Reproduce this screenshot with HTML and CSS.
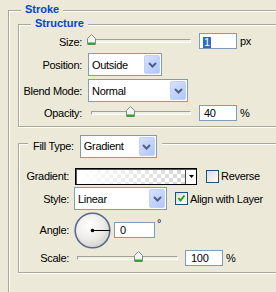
FILE: index.html
```html
<!DOCTYPE html>
<html lang="en">
<head>
    <meta charset="UTF-8">
    <meta name="viewport" content="width=device-width, initial-scale=1.0">
    <title>Stroke</title>
    <link rel="stylesheet" href="styles.css">
</head>
<body>
    <div class="group outer">
        <div class="group-title">Stroke</div>

        <!-- Structure -->
        <div class="group structure">
            <div class="group-title">Structure</div>
            <div class="form struct-form">
                <label>Size:</label>
                <div class="controls top">
                    <div class="slider"><div class="rail">
                        <span class="thumb" style="left:0%"><svg width="9" height="11" viewBox="0 0 9 11"><path d="M4.5 0.5 L8.5 4.5 V10.5 H0.5 V4.5 Z" fill="#f3f3ef" stroke="#7d8f80"/><path d="M1 9.5 H8" stroke="#28a428" stroke-width="2"/></svg></span>
                    </div></div>
                    <div class="textbox num"><span class="selected">1</span></div>
                    <span class="unit">px</span>
                </div>

                <label>Position:</label>
                <div class="controls">
                    <div class="select pos-select">
                        <span class="value">Outside</span>
                        <span class="drop"><svg width="9" height="6" viewBox="0 0 9 6"><path d="M1 1 L4.5 4.5 L8 1" fill="none" stroke="#4d6185" stroke-width="2"/></svg></span>
                    </div>
                </div>

                <label>Blend Mode:</label>
                <div class="controls">
                    <div class="select blend-select">
                        <span class="value">Normal</span>
                        <span class="drop"><svg width="9" height="6" viewBox="0 0 9 6"><path d="M1 1 L4.5 4.5 L8 1" fill="none" stroke="#4d6185" stroke-width="2"/></svg></span>
                    </div>
                </div>

                <label>Opacity:</label>
                <div class="controls">
                    <div class="slider"><div class="rail">
                        <span class="thumb" style="left:40%"><svg width="9" height="11" viewBox="0 0 9 11"><path d="M4.5 0.5 L8.5 4.5 V10.5 H0.5 V4.5 Z" fill="#f3f3ef" stroke="#7d8f80"/><path d="M1 9.5 H8" stroke="#28a428" stroke-width="2"/></svg></span>
                    </div></div>
                    <div class="textbox num">40</div>
                    <span class="unit">%</span>
                </div>
            </div>
        </div>

        <!-- Fill -->
        <div class="group fill">
            <div class="group-title fill-title">
                <span>Fill Type:</span>
                <div class="select type-select">
                    <span class="value">Gradient</span>
                    <span class="drop"><svg width="9" height="6" viewBox="0 0 9 6"><path d="M1 1 L4.5 4.5 L8 1" fill="none" stroke="#4d6185" stroke-width="2"/></svg></span>
                </div>
            </div>
            <div class="form fill-form">
                <label>Gradient:</label>
                <div class="controls">
                    <div class="swatch">
                        <span class="ramp"></span>
                        <span class="swatch-drop"><svg width="5" height="3" viewBox="0 0 5 3"><path d="M0 0 H5 L2.5 3 Z" fill="#000"/></svg></span>
                    </div>
                    <span class="check reverse-check"></span>
                    <span class="check-label">Reverse</span>
                </div>

                <label>Style:</label>
                <div class="controls">
                    <div class="select style-select">
                        <span class="value">Linear</span>
                        <span class="drop"><svg width="9" height="6" viewBox="0 0 9 6"><path d="M1 1 L4.5 4.5 L8 1" fill="none" stroke="#4d6185" stroke-width="2"/></svg></span>
                    </div>
                    <span class="check align-check"><svg width="11" height="11" viewBox="0 0 11 11"><path d="M2.5 5 L4.5 7.5 L8.5 2.5" fill="none" stroke="#21a121" stroke-width="2"/></svg></span>
                    <span class="check-label">Align with Layer</span>
                </div>

                <label>Angle:</label>
                <div class="controls">
                    <svg class="dial" width="37" height="37" viewBox="0 0 37 37">
                        <defs>
                            <radialGradient id="dialFill" cx="40%" cy="35%" r="70%">
                                <stop offset="0" stop-color="#ffffff"/>
                                <stop offset="0.6" stop-color="#ecebe6"/>
                                <stop offset="1" stop-color="#cfcfcb"/>
                            </radialGradient>
                        </defs>
                        <circle cx="18.5" cy="18.5" r="17.3" fill="url(#dialFill)" stroke="#56698a" stroke-width="1.6"/>
                        <line x1="18.5" y1="18.5" x2="36" y2="18.5" stroke="#000" stroke-width="1"/>
                        <circle cx="18.5" cy="18.5" r="1.8" fill="#000"/>
                    </svg>
                    <div class="textbox angle-box">0</div>
                    <span class="degree">°</span>
                </div>

                <label>Scale:</label>
                <div class="controls">
                    <div class="slider wide"><div class="rail">
                        <span class="thumb" style="left:62%"><svg width="9" height="11" viewBox="0 0 9 11"><path d="M4.5 0.5 L8.5 4.5 V10.5 H0.5 V4.5 Z" fill="#f3f3ef" stroke="#7d8f80"/><path d="M1 9.5 H8" stroke="#28a428" stroke-width="2"/></svg></span>
                    </div></div>
                    <div class="textbox num scale-box">100</div>
                    <span class="unit">%</span>
                </div>
            </div>
        </div>
    </div>
</body>
</html>
```

FILE: styles.css
```css
body {
    margin: 0;
    height: 292px;
    overflow: hidden;
    background: #ece9d8;
    font-family: "Liberation Sans", Arial, sans-serif;
    font-size: 11px;
    letter-spacing: -0.3px;
    color: #000;
}
.group {
    border: 1px solid #aca899;
    border-right: 0;
    box-shadow: inset 1px 1px 0 #fff, 0 1px 0 #fff;
}
.outer {
    box-sizing: border-box;
    margin: 10px 0 0 8px;
    border-bottom: 0;
    height: 282px;
    box-shadow: inset 1px 1px 0 #fff;
}
.group-title {
    width: max-content;
    height: 13px;
    line-height: 13px;
    margin: -8px 0 0 12px;
    padding: 0 4px;
    background: #ece9d8;
    color: #0046d5;
    font-weight: bold;
    letter-spacing: 0;
}
.structure {
    margin: 8px 0 0 9px;
    padding-bottom: 5px;
}
.fill {
    margin: 16px 0 0 9px;
    padding-bottom: 6px;
}
.fill-title {
    display: flex;
    align-items: center;
    gap: 6px;
    height: 23px;
    margin: -9px 0 0 9px;
    padding: 0 5px;
    color: #000;
    font-weight: normal;
    letter-spacing: -0.3px;
}
.form {
    display: grid;
    align-items: center;
}
.form label {
    text-align: right;
    white-space: nowrap;
}
.struct-form {
    grid-template-columns: 63px auto;
    grid-template-rows: 17px 23px 23px 16px;
    column-gap: 6px;
    row-gap: 3px;
    margin-top: 3px;
}
.fill-form {
    grid-template-columns: 50px auto;
    grid-template-rows: 18px 23px 36px 16px;
    column-gap: 5px;
    row-gap: 2px;
    margin-top: 9px;
}
.controls {
    display: flex;
    align-items: center;
}
.controls.top {
    align-self: start;
}
.textbox {
    box-sizing: border-box;
    height: 16px;
    line-height: 14px;
    border: 1px solid #7f9db9;
    background: #fff;
    padding: 0 4px;
}
.num {
    width: 38px;
    margin-left: 4px;
}
.scale-box {
    margin-left: 3px;
    padding-left: 5px;
}
.selected {
    display: inline-block;
    line-height: 11px;
    padding: 0 1px;
    margin-left: -1px;
    background: #316ac5;
    color: #fff;
    vertical-align: -1px;
}
.unit {
    margin-left: 3px;
}
.slider {
    margin-left: -1px;
    padding: 0 4px;
}
.rail {
    position: relative;
    box-sizing: border-box;
    width: 100px;
    height: 4px;
    border-top: 1px solid #a3a193;
    border-left: 1px solid #a3a193;
    border-bottom: 1px solid #fff;
    border-right: 1px solid #fff;
    background: #f1efe4;
}
.wide .rail {
    width: 101px;
}
.thumb {
    position: absolute;
    top: -6px;
    margin-left: -5px;
    width: 9px;
    height: 11px;
}
.thumb svg {
    display: block;
}
.select {
    box-sizing: border-box;
    display: flex;
    align-items: center;
    height: 23px;
    border: 1px solid #7f9db9;
    background: #fff;
}
.select .value {
    flex: 1;
    padding-left: 3px;
}
.drop {
    box-sizing: border-box;
    display: flex;
    align-items: center;
    justify-content: center;
    width: 16px;
    height: 19px;
    margin: 1px;
    border: 1px solid #c0d1fb;
    border-radius: 2px;
    background: linear-gradient(135deg, #d6e2fd, #b2c5f6);
}
.drop svg {
    margin-top: 1px;
}
.pos-select {
    width: 74px;
}
.blend-select {
    width: 100px;
}
.type-select {
    width: 77px;
}
.style-select {
    width: 93px;
}
.swatch {
    box-sizing: border-box;
    display: flex;
    width: 122px;
    height: 17px;
    margin-left: 1px;
    border: 1px solid #000;
    box-shadow: inset 1px 1px 0 #555;
    background: #fff;
}
.ramp {
    flex: 1;
    margin: 1px 0 0 1px;
    background:
        linear-gradient(to right, #fff, rgba(255, 255, 255, 0)),
        conic-gradient(#d6d6d6 25%, #fff 0 50%, #d6d6d6 0 75%, #fff 0) 0 0 / 8px 8px;
}
.swatch-drop {
    display: flex;
    align-items: center;
    justify-content: center;
    width: 10px;
    margin-top: 1px;
    border-left: 1px solid #444;
    background: #fff;
}
.check {
    box-sizing: border-box;
    display: flex;
    align-items: center;
    justify-content: center;
    width: 13px;
    height: 13px;
    border: 1px solid #1c5180;
    background: linear-gradient(135deg, #dcdcd7, #fff);
}
.reverse-check {
    margin-left: 9px;
}
.align-check {
    margin-left: 8px;
}
.check-label {
    margin-left: 2px;
    white-space: nowrap;
}
.dial {
    display: block;
    margin-top: 1px;
}
.angle-box {
    width: 41px;
    margin-left: 3px;
    padding-left: 5px;
}
.degree {
    align-self: flex-start;
    margin: 7px 0 0 2px;
    line-height: 11px;
}
```
